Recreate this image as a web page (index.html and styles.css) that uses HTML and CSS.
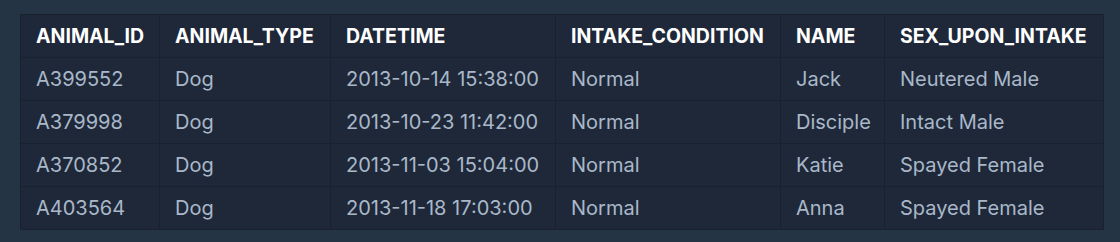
FILE: index.html
```html
<!DOCTYPE html>
<html>
<head>
<meta charset="utf-8">
<link rel="stylesheet" href="styles.css">
</head>
<body>
<div class="wrap">
<table class="grid">
<colgroup>
<col class="c1"><col class="c2"><col class="c3"><col class="c4"><col class="c5"><col class="c6">
</colgroup>
<thead>
<tr><th>ANIMAL_ID</th><th>ANIMAL_TYPE</th><th>DATETIME</th><th>INTAKE_CONDITION</th><th>NAME</th><th>SEX_UPON_INTAKE</th></tr>
</thead>
<tbody>
<tr><td>A399552</td><td>Dog</td><td>2013-10-14 15:38:00</td><td>Normal</td><td>Jack</td><td>Neutered Male</td></tr>
<tr><td>A379998</td><td>Dog</td><td>2013-10-23 11:42:00</td><td>Normal</td><td>Disciple</td><td>Intact Male</td></tr>
<tr><td>A370852</td><td>Dog</td><td>2013-11-03 15:04:00</td><td>Normal</td><td>Katie</td><td>Spayed Female</td></tr>
<tr><td>A403564</td><td>Dog</td><td>2013-11-18 17:03:00</td><td>Normal</td><td>Anna</td><td>Spayed Female</td></tr>
</tbody>
</table>
</div>
</body>
</html>
```
FILE: styles.css
```css
html, body {
  margin: 0;
  padding: 0;
  background: #253445;
}
.wrap {
  padding: 14px 17px 13px 20px;
}
.grid {
  width: 1083px;
  table-layout: fixed;
  border-collapse: collapse;
  background: #1f2839;
  font-family: Inter, "Noto Sans", sans-serif;
  font-size: 20px;
  border: 1px solid #19212e;
}
.c1 { width: 139px; }
.c2 { width: 171px; }
.c3 { width: 225px; }
.c4 { width: 225px; }
.c5 { width: 104px; }
.c6 { width: 219px; }
.grid th, .grid td {
  text-align: left;
  padding: 0 15px;
  height: 42px;
  border: 1px solid #19212e;
  white-space: nowrap;
}
.grid th {
  color: #ffffff;
  font-weight: 700;
  font-size: 19.5px;
}
.grid td {
  color: #a9b8c9;
  font-weight: 400;
}
```
